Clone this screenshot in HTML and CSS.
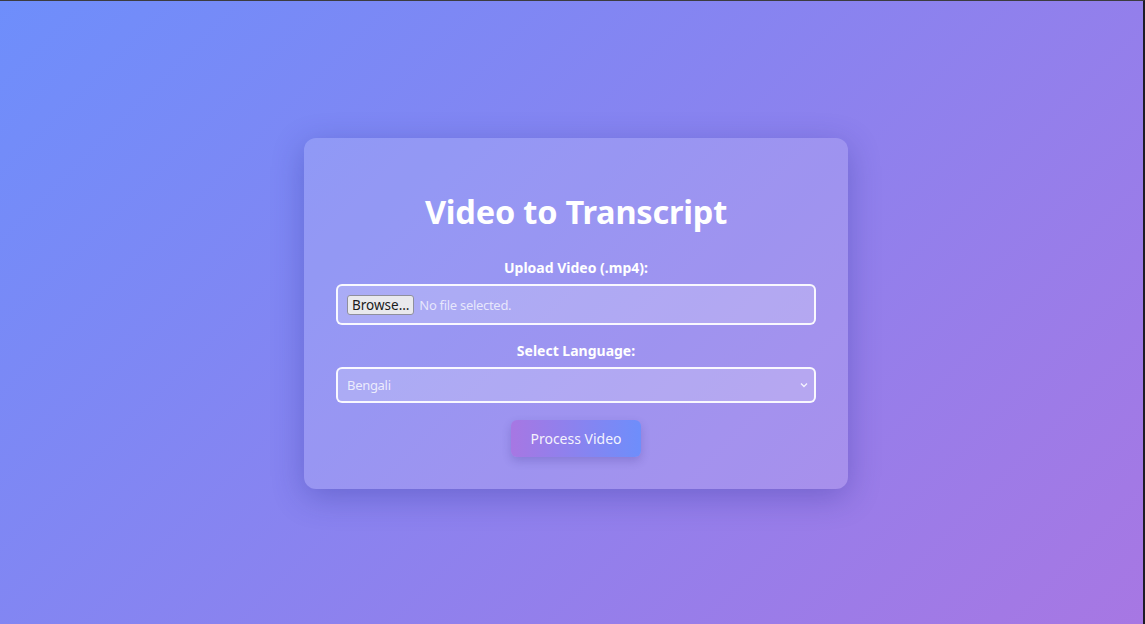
FILE: index.html
```html
<!DOCTYPE html>
<html lang="en">
<head>
<meta charset="utf-8">
<title>Video to Transcript</title>
<link rel="stylesheet" href="styles.css">
</head>
<body>
<div class="frame">
  <main class="stage">
    <form class="card">
      <h1 class="title">Video to Transcript</h1>
      <label class="label label-first">Upload Video (.mp4):</label>
      <div class="field file-field">
        <span class="browse">Browse…</span>
        <span class="file-name">No file selected.</span>
      </div>
      <label class="label label-second">Select Language:</label>
      <div class="field select-field">
        <span class="select-value">Bengali</span>
        <svg class="chevron" width="8" height="6" viewBox="0 0 8 6"><path d="M1 1.5 L4 4.5 L7 1.5" fill="none" stroke="rgba(255,255,255,0.85)" stroke-width="1.4"/></svg>
      </div>
      <div class="actions">
        <button type="button" class="process">Process Video</button>
      </div>
    </form>
  </main>
</div>
</body>
</html>
```

FILE: styles.css
```css
* { box-sizing: border-box; }
html, body { margin: 0; padding: 0; height: 100%; }
body {
  font-family: "Noto Sans", "Open Sans", sans-serif;
  background: #2a2a2e;
}
.frame {
  height: 100%;
  border-top: 1px solid #3c3c40;
  border-right: 2px solid #1e1b26;
}
.stage {
  height: 100%;
  background: linear-gradient(135deg, #6e8efb, #a777e3);
  display: flex;
  align-items: center;
  justify-content: center;
  padding-left: 9px;
  padding-top: 2px;
}
.card {
  width: 544px;
  padding: 32px;
  border-radius: 12px;
  background: rgba(255, 255, 255, 0.15);
  box-shadow: 0 8px 32px 0 rgba(31, 38, 135, 0.3);
  display: flex;
  flex-direction: column;
  color: #fff;
}
.title {
  margin: 20px 0 22px;
  font-size: 32.5px;
  line-height: 44px;
  font-weight: 700;
  text-align: center;
  letter-spacing: -0.2px;
}
.label {
  display: block;
  text-align: center;
  font-size: 14px;
  line-height: 20px;
  font-weight: 700;
}
.label-first {
  padding-top: 2px;
  margin-bottom: 6px;
}
.label-second {
  margin-top: 16px;
  margin-bottom: 6px;
}
.field {
  border: 2px solid rgba(255, 255, 255, 0.92);
  border-radius: 6px;
  background: rgba(255, 255, 255, 0.2);
  display: flex;
  align-items: center;
}
.file-field {
  height: 41px;
  padding: 0 9px;
  gap: 5px;
}
.browse {
  display: inline-flex;
  align-items: center;
  height: 20px;
  padding: 0 4px;
  background: #e9e9ed;
  border: 1px solid #8f8f9d;
  border-radius: 3px;
  color: #1b1b1b;
  font-size: 13.5px;
}
.file-name {
  color: rgba(255, 255, 255, 0.72);
  font-size: 13px;
  letter-spacing: -0.3px;
}
.select-field {
  height: 36px;
  padding: 0 6px 0 9px;
  justify-content: space-between;
}
.select-value {
  color: rgba(255, 255, 255, 0.78);
  font-size: 13px;
  letter-spacing: -0.3px;
}
.chevron { display: block; }
.actions {
  display: flex;
  justify-content: center;
  margin-top: 17px;
}
.process {
  width: 130px;
  height: 37px;
  border: none;
  border-radius: 6px;
  background: linear-gradient(90deg, #a777e3, #6e8efb);
  color: rgba(255, 255, 255, 0.92);
  font-family: inherit;
  font-size: 14px;
  box-shadow: 0 4px 10px rgba(40, 30, 120, 0.2);
  cursor: pointer;
}
```
